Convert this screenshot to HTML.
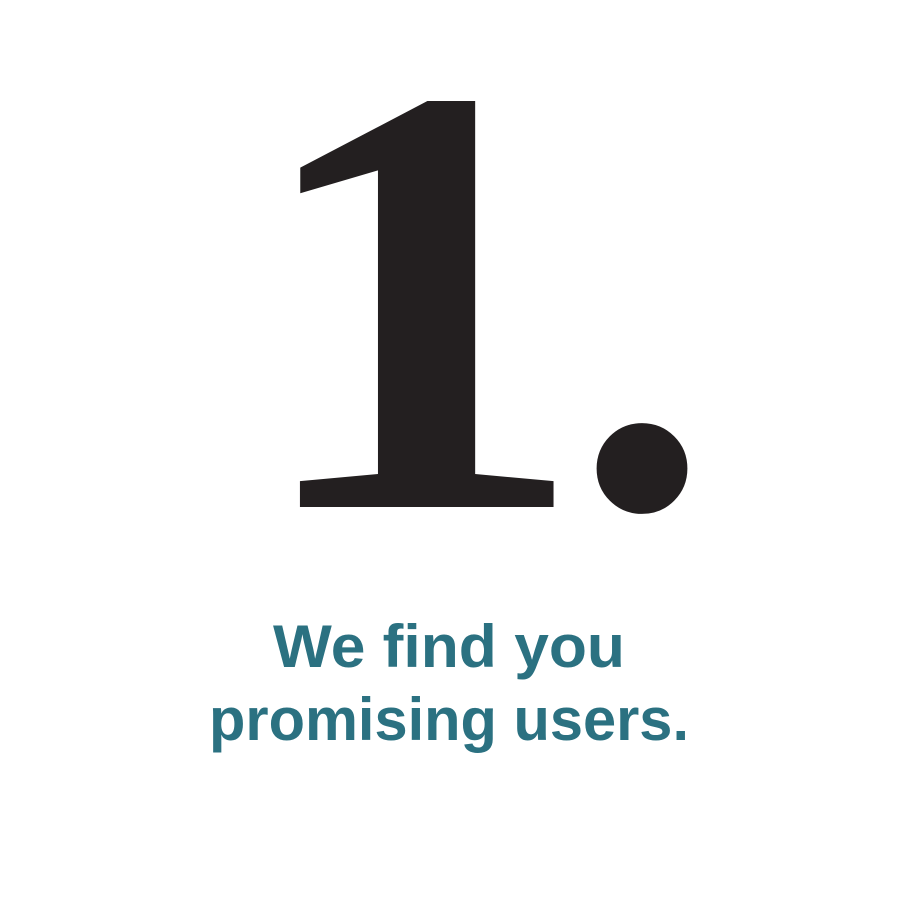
<!DOCTYPE html>
<html><head><meta charset="utf-8"><style>
html,body{margin:0;padding:0;background:#fff;width:898px;height:902px;overflow:hidden}
svg{display:block}
</style></head><body>
<svg width="898" height="902" viewBox="0 0 898 902" xmlns="http://www.w3.org/2000/svg">
<text x="423" y="507" text-anchor="middle" font-family="Liberation Serif, serif" font-weight="bold" font-size="615" fill="#231f20" transform="translate(-6 0) translate(423 507) scale(1.12 1) translate(-423 -507)">1</text>
<text x="642" y="506" text-anchor="middle" font-family="Liberation Serif, serif" font-weight="bold" font-size="560" fill="#231f20">.</text>
<text x="449" y="667" text-anchor="middle" font-family="Liberation Sans, sans-serif" font-weight="bold" font-size="60" fill="#2b7181" textLength="352" lengthAdjust="spacingAndGlyphs">We find you</text>
<text x="449" y="740" text-anchor="middle" font-family="Liberation Sans, sans-serif" font-weight="bold" font-size="60" fill="#2b7181" textLength="480" lengthAdjust="spacingAndGlyphs">promising users.</text>
</svg>
</body></html>
